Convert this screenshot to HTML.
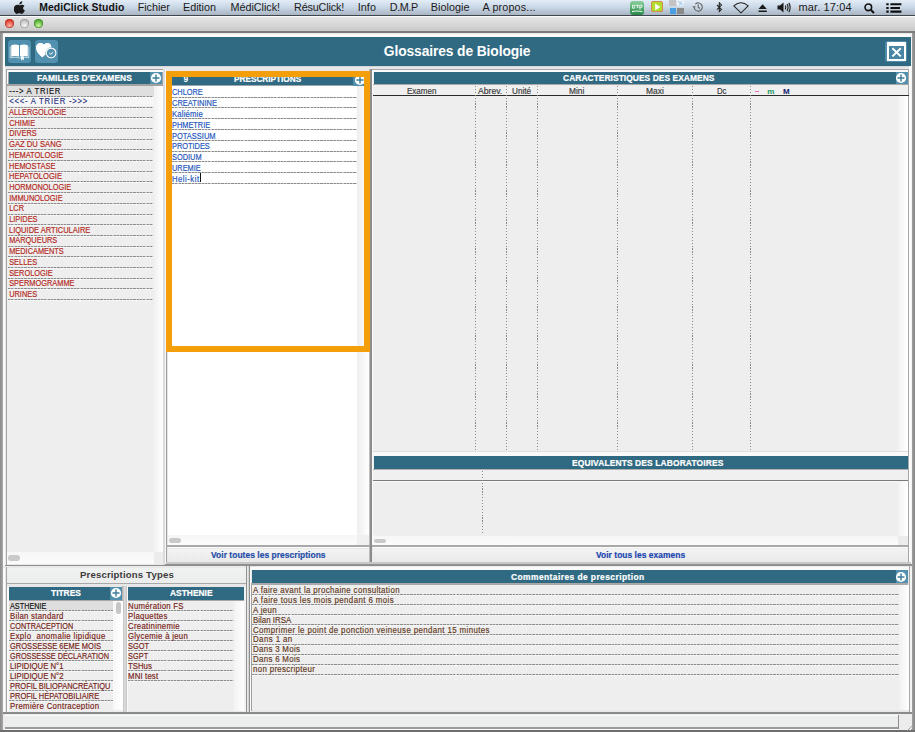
<!DOCTYPE html>
<html><head><meta charset="utf-8"><style>
html,body{margin:0;padding:0;width:915px;height:732px;overflow:hidden;background:#e6e6e6;}
body{position:relative;font-family:"Liberation Sans",sans-serif;}
div,span,svg{position:absolute;}
span{white-space:pre;line-height:1;}
</style></head><body>
<div style="left:0px;top:0px;width:915px;height:732px;background:#e6e6e6;"></div>
<div style="left:0px;top:0px;width:915px;height:14.5px;background:linear-gradient(#e2edf8 0%,#c9d6e4 50%,#a9b5c2 100%);"></div>
<div style="left:0px;top:14.5px;width:915px;height:1.2px;background:#3f464e;"></div>
<svg style="left:14px;top:1px" width="12" height="13" viewBox="0 0 12 13"><path d="M8.3 0.2c0.1 0.9-0.3 1.8-0.8 2.4-0.6 0.6-1.4 1-2.2 0.9-0.1-0.9 0.3-1.7 0.8-2.3 0.6-0.6 1.5-1 2.2-1z M10.9 9.2c-0.3 0.8-0.5 1.1-0.9 1.8-0.6 0.9-1.4 1.9-2.4 1.9-0.9 0-1.1-0.6-2.3-0.6-1.2 0-1.5 0.6-2.4 0.6-1 0-1.7-0.9-2.3-1.8C-0.9 8.6-0.1 5.2 1.6 4.3c0.6-0.4 1.3-0.6 2-0.6 0.9 0 1.5 0.6 2.3 0.6 0.7 0 1.2-0.6 2.3-0.6 0.8 0 1.7 0.4 2.3 1.2-2 1.1-1.7 4 0.3 4.3z" fill="#1a1a1a"/></svg>
<span style="left:39.20px;top:3.00px;font-size:10.4px;color:#111;font-weight:bold;letter-spacing:0.095px;">MediClick Studio</span>
<span style="left:137.70px;top:2.00px;font-size:10.8px;color:#1a1a1a;letter-spacing:-0.043px;">Fichier</span>
<span style="left:183.00px;top:2.00px;font-size:10.8px;color:#1a1a1a;">Edition</span>
<span style="left:230.50px;top:2.00px;font-size:10.8px;color:#1a1a1a;letter-spacing:-0.031px;">MédiClick!</span>
<span style="left:294.00px;top:2.00px;font-size:10.8px;color:#1a1a1a;letter-spacing:-0.161px;">RésuClick!</span>
<span style="left:357.70px;top:2.00px;font-size:10.8px;color:#1a1a1a;letter-spacing:0.072px;">Info</span>
<span style="left:389.80px;top:2.00px;font-size:10.8px;color:#1a1a1a;letter-spacing:-0.420px;">D.M.P</span>
<span style="left:430.80px;top:2.00px;font-size:10.8px;color:#1a1a1a;letter-spacing:0.034px;">Biologie</span>
<span style="left:482.60px;top:2.00px;font-size:10.8px;color:#1a1a1a;letter-spacing:0.134px;">A propos...</span>
<span style="left:798.60px;top:2.00px;font-size:11px;color:#1a1a1a;letter-spacing:0.103px;">mar. 17:04</span>
<div style="left:629.8px;top:0.7px;width:14px;height:14px;background:linear-gradient(#8fd09f,#58b072 45%,#3d9d5c 70%,#2a8748);border-radius:3px;"></div>
<svg style="left:630px;top:1px" width="14" height="14" viewBox="0 0 14 14"><path d="M2.5 4.2 h2.2 v3 h-2.2z M5.6 4.2 h3.6 v3 M7.4 4.2 v3 M10 4.2 h2 v2 h-2 v2.5" fill="none" stroke="#fff" stroke-width="0.9" opacity="0.9"/><path d="M2 10.6 Q7 9.2 12.5 10.8" stroke="#e8f5ea" stroke-width="1.1" fill="none"/></svg>
<div style="left:651.2px;top:0.6px;width:11.6px;height:11.8px;background:#b2dc2c;border-radius:2.5px;box-shadow:inset 0 0 0 0.8px #d77a5a;"></div>
<svg style="left:654px;top:2.6px" width="7" height="8"><path d="M1.2 0.6 L6.4 3.9 L1.2 7.2z" fill="#fff"/></svg>
<div style="left:668.8px;top:0px;width:7.2px;height:6.4px;background:#c3c3c3;"></div>
<div style="left:669.5px;top:7.5px;width:6.6px;height:6.6px;background:#4a9fe2;"></div>
<div style="left:677px;top:7.5px;width:6.5px;height:6.6px;background:#8a8a8a;"></div>
<div style="left:677px;top:0px;width:7px;height:6.4px;background:#eef3f8;"></div>
<svg style="left:677px;top:0px" width="7" height="6.4" viewBox="0 0 7 6.4"><path d="M1 1 L3 3 L5 1.5 M2 5 L4.5 3.5 L6 5.5" stroke="#7fb6e6" stroke-width="0.8" fill="none"/></svg>
<svg style="left:692px;top:1px" width="12" height="12" viewBox="0 0 12 12"><path d="M2.1 6.3 A4.1 4.1 0 1 0 3.3 3.1" fill="none" stroke="#666" stroke-width="1.1"/><path d="M6.2 3.4 V6.3 L8 7.5" fill="none" stroke="#666" stroke-width="1.1"/><path d="M0.3 5.3 L2.1 7.3 L3.9 5.3z" fill="#666"/></svg>
<svg style="left:716px;top:2px" width="7" height="11" viewBox="0 0 7 11"><path d="M1 3 L5.5 7.4 L3.3 9.6 V0.8 L5.5 3 L1 7.6" fill="none" stroke="#222" stroke-width="1.05"/></svg>
<svg style="left:733px;top:1.5px" width="16" height="12" viewBox="0 0 16 12"><path d="M0.8 3.8 Q8 -2.2 15.2 3.8 L8 11z" fill="none" stroke="#222" stroke-width="1.05" stroke-linejoin="round"/></svg>
<svg style="left:757.5px;top:3px" width="10" height="10" viewBox="0 0 10 10"><path d="M0.5 6 L4.6 1.2 L8.8 6z M0.5 7.4 H8.8 V8.9 H0.5z" fill="#1a1a1a"/></svg>
<svg style="left:776.5px;top:2px" width="14" height="11" viewBox="0 0 14 11"><path d="M0.5 3.5 H3 L6.5 0.5 V10.5 L3 7.5 H0.5z" fill="#1a1a1a"/><path d="M8.2 3.6 Q9.3 5.5 8.2 7.4 M10 2.1 Q12.1 5.5 10 8.9 M11.8 0.9 Q14.5 5.5 11.8 10.1" fill="none" stroke="#1a1a1a" stroke-width="1.1"/></svg>
<svg style="left:864px;top:2.5px" width="11" height="11" viewBox="0 0 11 11"><circle cx="4.3" cy="4.3" r="3.3" fill="none" stroke="#111" stroke-width="1.6"/><path d="M6.7 6.7 L10 10" stroke="#111" stroke-width="2"/></svg>
<svg style="left:885.5px;top:3px" width="16" height="10" viewBox="0 0 16 10"><path d="M0.3 0.2h2.4v2.1h-2.4z M0.3 3.9h2.4v2.1h-2.4z M0.3 7.6h2.4v2.1h-2.4z M4.4 0.2h11v2.1h-11z M4.4 3.9h9.6v2.1h-9.6z M4.4 7.6h11v2.1h-11z" fill="#111"/></svg>
<div style="left:0px;top:15.7px;width:915px;height:1.3px;background:#fbfbfb;"></div>
<div style="left:0px;top:17px;width:915px;height:13.8px;background:linear-gradient(#e5e5e5,#c9c9c9);"></div>
<div style="left:0px;top:30.8px;width:915px;height:1.8px;background:#7c7c7c;"></div>
<div style="left:5.200000000000001px;top:18.8px;width:9.2px;height:9.2px;border-radius:50%;background:radial-gradient(circle at 50% 72%,#ffb3a6 0%,#d8321f 70%);box-shadow:inset 0 0 0 0.6px #a33;"></div>
<div style="left:19.700000000000003px;top:18.8px;width:9.2px;height:9.2px;border-radius:50%;background:radial-gradient(circle at 50% 72%,#f6f6f6 0%,#b9b9b9 70%);box-shadow:inset 0 0 0 0.6px #8c8c8c;"></div>
<div style="left:34.0px;top:18.8px;width:9.2px;height:9.2px;border-radius:50%;background:radial-gradient(circle at 50% 72%,#c9f59d 0%,#48a82a 70%);box-shadow:inset 0 0 0 0.6px #3c7d2a;"></div>
<div style="left:0px;top:32.6px;width:915px;height:699.4px;background:#e8e8e8;"></div>
<div style="left:0px;top:32.6px;width:2.8px;height:699.4px;background:linear-gradient(90deg,#8a8a8a,#a8a8a8);"></div>
<div style="left:912px;top:32.6px;width:3px;height:699.4px;background:linear-gradient(90deg,#a0a0a0,#858585);"></div>
<div style="left:2.8px;top:33.5px;width:909.2px;height:3.1px;background:#fbfbfb;"></div>
<div style="left:2.8px;top:33.5px;width:2.5px;height:680px;background:#fbfbfb;"></div>
<div style="left:909.5px;top:33.5px;width:2.5px;height:680px;background:#f4f4f4;"></div>
<div style="left:5.3px;top:36.6px;width:905.9px;height:29.3px;background:#306a82;"></div>
<div style="left:8.2px;top:40px;width:22.5px;height:22.5px;background:#5190ae;border-radius:3px;"></div>
<div style="left:35.2px;top:40px;width:22.5px;height:22.5px;background:#5190ae;border-radius:3px;"></div>
<svg style="left:9px;top:42px" width="21" height="19" viewBox="0 0 21 19"><path d="M2.2 3.2 Q6 1.6 10 3.2 V14.6 Q6 13.2 2.2 14.6z" fill="#fff"/><path d="M11 3.2 Q15 1.6 18.8 3.2 V14.6 Q15 13.2 11 14.6z" fill="#fff"/><path d="M1.2 4.6 V15.8 Q6 14.6 10.5 16 Q15 14.6 19.8 15.8 V4.6" fill="none" stroke="#cfe0ea" stroke-width="0.9"/><path d="M12 14.2 V18.5 L13.4 17.2 L14.8 18.5 V14.2z" fill="#fff"/></svg>
<svg style="left:36px;top:41px" width="22" height="21" viewBox="0 0 22 21"><path d="M6.3 16.2 C2.8 13.2 0.2 10.6 0.2 6.3 C0.2 3.6 2.2 1.9 4.6 1.9 C6.2 1.9 7.3 2.8 7.9 3.9 C8.5 2.8 9.7 1.9 11.3 1.9 C13.7 1.9 15.3 3.6 15.3 6.2 L15.2 7" fill="#fff"/><path d="M6.3 16.2 C2.8 13.2 0.2 10.6 0.2 6.3 C0.2 3.6 2.2 1.9 4.6 1.9 C6.2 1.9 7.3 2.8 7.9 3.9 C8.5 2.8 9.7 1.9 11.3 1.9 C13.7 1.9 15.3 3.6 15.3 6.2 L15.3 7 L10 9 L9.5 13.5z" fill="#fff"/><circle cx="15.1" cy="11.9" r="5.6" fill="#5190ae"/><circle cx="15.1" cy="11.9" r="4.8" fill="none" stroke="#fff" stroke-width="1.1"/><path d="M13.1 11.9 L14.9 13.3 L17.3 11.1" fill="none" stroke="#fff" stroke-width="1"/></svg>
<span style="left:383.80px;top:45.00px;font-size:13.8px;color:#fff;font-weight:bold;letter-spacing:-0.099px;">Glossaires de Biologie</span>
<div style="left:885.4px;top:40.8px;width:21.5px;height:21.5px;background:#4f8dab;border-radius:3px;"></div>
<div style="left:886.8px;top:41.5px;width:19.2px;height:19px;background:#fff;"></div>
<div style="left:888.5px;top:46px;width:15.5px;height:12.8px;background:#4886a4;"></div>
<svg style="left:890.5px;top:46.8px" width="11" height="10.5" viewBox="0 0 11 10.5"><path d="M1.4 1.2 L9.8 9.4 M9.8 1.2 L1.4 9.4" stroke="#fff" stroke-width="1.9"/></svg>
<div style="left:5.3px;top:65.9px;width:905.9px;height:1.2px;background:#d6d6d6;"></div>
<div style="left:5.9px;top:69px;width:158px;height:17px;background:#a2a2a2;"></div>
<div style="left:6.9px;top:70.1px;width:156px;height:1.5px;background:#fafafa;"></div>
<div style="left:6.9px;top:70.1px;width:1.6px;height:14px;background:#fafafa;"></div>
<div style="left:8.6px;top:71.6px;width:153.5px;height:12.2px;background:#306a82;"></div>
<span style="left:37.00px;top:75.00px;font-size:8.1px;color:#fff;font-weight:bold;letter-spacing:0.067px;transform:scale(1.0400,1.150);transform-origin:0 6px;-webkit-text-stroke:0.18px #fff;">FAMILLES D&#x27;EXAMENS</span>
<div style="left:149.8px;top:71.6px;width:12.199999999999989px;height:12.200000000000003px;background:#5290ad;"></div>
<svg style="left:149.80px;top:71.80px" width="12" height="12" viewBox="0 0 12 12"><circle cx="6" cy="6" r="5.1" fill="#fff"/><path d="M6 2.5 V9.5 M2.5 6 H9.5" stroke="#3f7f9c" stroke-width="1.45"/></svg>
<div style="left:5.9px;top:86px;width:1.1px;height:479px;background:#a5a5a5;"></div>
<div style="left:7px;top:85.8px;width:146.5px;height:478px;background:#eeeeee;"></div>
<div style="left:153.5px;top:85.8px;width:9.7px;height:466px;background:linear-gradient(90deg,#f1f1f1,#ffffff);"></div>
<div style="left:163.2px;top:69px;width:1.5px;height:496px;background:#dcdcdc;"></div>
<div style="left:164.7px;top:69px;width:1.3px;height:496px;background:#f7f9fb;"></div>
<div style="left:7px;top:85.8px;width:146.5px;height:10.5px;background:#dfdfdf;"></div>
<div style="left:7px;top:97.3px;width:146.5px;height:9.2px;background:#f6f6f6;"></div>
<div style="left:7.5px;top:95.8px;width:145.5px;height:1px;background-image:repeating-linear-gradient(90deg,#8c8c8c 0 2.2px,#c6c6c6 2.2px 3.3px);"></div>
<div style="left:7.5px;top:96.8px;width:145.5px;height:1px;background:rgba(255,255,255,0.45);"></div>
<span style="left:9.20px;top:88.00px;font-size:7.7px;color:#111;letter-spacing:0.690px;transform:scale(1.0000,1.100);transform-origin:0 6px;-webkit-text-stroke:0.12px #111;">---&gt; A TRIER</span>
<div style="left:7.5px;top:106.5px;width:145.5px;height:1px;background-image:repeating-linear-gradient(90deg,#8c8c8c 0 2.2px,#c6c6c6 2.2px 3.3px);"></div>
<div style="left:7.5px;top:107.5px;width:145.5px;height:1px;background:rgba(255,255,255,0.45);"></div>
<span style="left:9.20px;top:98.00px;font-size:7.7px;color:#26337e;letter-spacing:0.778px;transform:scale(1.0000,1.100);transform-origin:0 6px;-webkit-text-stroke:0.12px #26337e;">&lt;&lt;&lt;- A TRIER -&gt;&gt;&gt;</span>
<div style="left:7.5px;top:117.19999999999999px;width:145.5px;height:1px;background-image:repeating-linear-gradient(90deg,#8c8c8c 0 2.2px,#c6c6c6 2.2px 3.3px);"></div>
<div style="left:7.5px;top:118.19999999999999px;width:145.5px;height:1px;background:rgba(255,255,255,0.45);"></div>
<span style="left:9.20px;top:109.00px;font-size:7.4px;color:#b52a1f;transform:scale(0.9935,1.150);transform-origin:0 6px;-webkit-text-stroke:0.16px #b52a1f;">ALLERGOLOGIE</span>
<div style="left:7.5px;top:127.89999999999998px;width:145.5px;height:1px;background-image:repeating-linear-gradient(90deg,#8c8c8c 0 2.2px,#c6c6c6 2.2px 3.3px);"></div>
<div style="left:7.5px;top:128.89999999999998px;width:145.5px;height:1px;background:rgba(255,255,255,0.45);"></div>
<span style="left:9.20px;top:120.00px;font-size:7.4px;color:#b52a1f;transform:scale(1.0000,1.150);transform-origin:0 6px;-webkit-text-stroke:0.16px #b52a1f;">CHIMIE</span>
<div style="left:7.5px;top:138.6px;width:145.5px;height:1px;background-image:repeating-linear-gradient(90deg,#8c8c8c 0 2.2px,#c6c6c6 2.2px 3.3px);"></div>
<div style="left:7.5px;top:139.6px;width:145.5px;height:1px;background:rgba(255,255,255,0.45);"></div>
<span style="left:9.20px;top:130.00px;font-size:7.4px;color:#b52a1f;transform:scale(1.0000,1.150);transform-origin:0 6px;-webkit-text-stroke:0.16px #b52a1f;">DIVERS</span>
<div style="left:7.5px;top:149.3px;width:145.5px;height:1px;background-image:repeating-linear-gradient(90deg,#8c8c8c 0 2.2px,#c6c6c6 2.2px 3.3px);"></div>
<div style="left:7.5px;top:150.3px;width:145.5px;height:1px;background:rgba(255,255,255,0.45);"></div>
<span style="left:9.20px;top:141.00px;font-size:7.4px;color:#b52a1f;transform:scale(1.0327,1.150);transform-origin:0 6px;-webkit-text-stroke:0.16px #b52a1f;">GAZ DU SANG</span>
<div style="left:7.5px;top:160.0px;width:145.5px;height:1px;background-image:repeating-linear-gradient(90deg,#8c8c8c 0 2.2px,#c6c6c6 2.2px 3.3px);"></div>
<div style="left:7.5px;top:161.0px;width:145.5px;height:1px;background:rgba(255,255,255,0.45);"></div>
<span style="left:9.20px;top:152.00px;font-size:7.4px;color:#b52a1f;transform:scale(1.0128,1.150);transform-origin:0 6px;-webkit-text-stroke:0.16px #b52a1f;">HEMATOLOGIE</span>
<div style="left:7.5px;top:170.7px;width:145.5px;height:1px;background-image:repeating-linear-gradient(90deg,#8c8c8c 0 2.2px,#c6c6c6 2.2px 3.3px);"></div>
<div style="left:7.5px;top:171.7px;width:145.5px;height:1px;background:rgba(255,255,255,0.45);"></div>
<span style="left:9.20px;top:163.00px;font-size:7.4px;color:#b52a1f;transform:scale(1.0120,1.150);transform-origin:0 6px;-webkit-text-stroke:0.16px #b52a1f;">HEMOSTASE</span>
<div style="left:7.5px;top:181.39999999999998px;width:145.5px;height:1px;background-image:repeating-linear-gradient(90deg,#8c8c8c 0 2.2px,#c6c6c6 2.2px 3.3px);"></div>
<div style="left:7.5px;top:182.39999999999998px;width:145.5px;height:1px;background:rgba(255,255,255,0.45);"></div>
<span style="left:9.20px;top:173.00px;font-size:7.4px;color:#b52a1f;transform:scale(1.0238,1.150);transform-origin:0 6px;-webkit-text-stroke:0.16px #b52a1f;">HEPATOLOGIE</span>
<div style="left:7.5px;top:192.1px;width:145.5px;height:1px;background-image:repeating-linear-gradient(90deg,#8c8c8c 0 2.2px,#c6c6c6 2.2px 3.3px);"></div>
<div style="left:7.5px;top:193.1px;width:145.5px;height:1px;background:rgba(255,255,255,0.45);"></div>
<span style="left:9.20px;top:184.00px;font-size:7.4px;color:#b52a1f;transform:scale(1.0000,1.150);transform-origin:0 6px;-webkit-text-stroke:0.16px #b52a1f;">HORMONOLOGIE</span>
<div style="left:7.5px;top:202.8px;width:145.5px;height:1px;background-image:repeating-linear-gradient(90deg,#8c8c8c 0 2.2px,#c6c6c6 2.2px 3.3px);"></div>
<div style="left:7.5px;top:203.8px;width:145.5px;height:1px;background:rgba(255,255,255,0.45);"></div>
<span style="left:9.20px;top:195.00px;font-size:7.4px;color:#b52a1f;transform:scale(1.0000,1.150);transform-origin:0 6px;-webkit-text-stroke:0.16px #b52a1f;">IMMUNOLOGIE</span>
<div style="left:7.5px;top:213.5px;width:145.5px;height:1px;background-image:repeating-linear-gradient(90deg,#8c8c8c 0 2.2px,#c6c6c6 2.2px 3.3px);"></div>
<div style="left:7.5px;top:214.5px;width:145.5px;height:1px;background:rgba(255,255,255,0.45);"></div>
<span style="left:9.20px;top:205.00px;font-size:7.4px;color:#b52a1f;transform:scale(1.0000,1.150);transform-origin:0 6px;-webkit-text-stroke:0.16px #b52a1f;">LCR</span>
<div style="left:7.5px;top:224.2px;width:145.5px;height:1px;background-image:repeating-linear-gradient(90deg,#8c8c8c 0 2.2px,#c6c6c6 2.2px 3.3px);"></div>
<div style="left:7.5px;top:225.2px;width:145.5px;height:1px;background:rgba(255,255,255,0.45);"></div>
<span style="left:9.20px;top:216.00px;font-size:7.4px;color:#b52a1f;transform:scale(1.0000,1.150);transform-origin:0 6px;-webkit-text-stroke:0.16px #b52a1f;">LIPIDES</span>
<div style="left:7.5px;top:234.89999999999998px;width:145.5px;height:1px;background-image:repeating-linear-gradient(90deg,#8c8c8c 0 2.2px,#c6c6c6 2.2px 3.3px);"></div>
<div style="left:7.5px;top:235.89999999999998px;width:145.5px;height:1px;background:rgba(255,255,255,0.45);"></div>
<span style="left:9.20px;top:227.00px;font-size:7.4px;color:#b52a1f;transform:scale(1.0172,1.150);transform-origin:0 6px;-webkit-text-stroke:0.16px #b52a1f;">LIQUIDE ARTICULAIRE</span>
<div style="left:7.5px;top:245.59999999999997px;width:145.5px;height:1px;background-image:repeating-linear-gradient(90deg,#8c8c8c 0 2.2px,#c6c6c6 2.2px 3.3px);"></div>
<div style="left:7.5px;top:246.59999999999997px;width:145.5px;height:1px;background:rgba(255,255,255,0.45);"></div>
<span style="left:9.20px;top:237.00px;font-size:7.4px;color:#b52a1f;transform:scale(1.0000,1.150);transform-origin:0 6px;-webkit-text-stroke:0.16px #b52a1f;">MARQUEURS</span>
<div style="left:7.5px;top:256.3px;width:145.5px;height:1px;background-image:repeating-linear-gradient(90deg,#8c8c8c 0 2.2px,#c6c6c6 2.2px 3.3px);"></div>
<div style="left:7.5px;top:257.3px;width:145.5px;height:1px;background:rgba(255,255,255,0.45);"></div>
<span style="left:9.20px;top:248.00px;font-size:7.4px;color:#b52a1f;transform:scale(1.0000,1.150);transform-origin:0 6px;-webkit-text-stroke:0.16px #b52a1f;">MEDICAMENTS</span>
<div style="left:7.5px;top:267.0px;width:145.5px;height:1px;background-image:repeating-linear-gradient(90deg,#8c8c8c 0 2.2px,#c6c6c6 2.2px 3.3px);"></div>
<div style="left:7.5px;top:268.0px;width:145.5px;height:1px;background:rgba(255,255,255,0.45);"></div>
<span style="left:9.20px;top:259.00px;font-size:7.4px;color:#b52a1f;transform:scale(1.0000,1.150);transform-origin:0 6px;-webkit-text-stroke:0.16px #b52a1f;">SELLES</span>
<div style="left:7.5px;top:277.7px;width:145.5px;height:1px;background-image:repeating-linear-gradient(90deg,#8c8c8c 0 2.2px,#c6c6c6 2.2px 3.3px);"></div>
<div style="left:7.5px;top:278.7px;width:145.5px;height:1px;background:rgba(255,255,255,0.45);"></div>
<span style="left:9.20px;top:270.00px;font-size:7.4px;color:#b52a1f;transform:scale(1.0000,1.150);transform-origin:0 6px;-webkit-text-stroke:0.16px #b52a1f;">SEROLOGIE</span>
<div style="left:7.5px;top:288.4px;width:145.5px;height:1px;background-image:repeating-linear-gradient(90deg,#8c8c8c 0 2.2px,#c6c6c6 2.2px 3.3px);"></div>
<div style="left:7.5px;top:289.4px;width:145.5px;height:1px;background:rgba(255,255,255,0.45);"></div>
<span style="left:9.20px;top:280.00px;font-size:7.4px;color:#b52a1f;transform:scale(1.0000,1.150);transform-origin:0 6px;-webkit-text-stroke:0.16px #b52a1f;">SPERMOGRAMME</span>
<div style="left:7.5px;top:299.09999999999997px;width:145.5px;height:1px;background-image:repeating-linear-gradient(90deg,#8c8c8c 0 2.2px,#c6c6c6 2.2px 3.3px);"></div>
<div style="left:7.5px;top:300.09999999999997px;width:145.5px;height:1px;background:rgba(255,255,255,0.45);"></div>
<span style="left:9.20px;top:291.00px;font-size:7.4px;color:#b52a1f;transform:scale(1.0000,1.150);transform-origin:0 6px;-webkit-text-stroke:0.16px #b52a1f;">URINES</span>
<div style="left:7px;top:552px;width:146.5px;height:11.5px;background:linear-gradient(#f6f6f6,#fbfbfb);"></div>
<div style="left:153.5px;top:552px;width:9.7px;height:11.5px;background:#ececec;"></div>
<div style="left:8.2px;top:555.3px;width:12px;height:5.5px;background:#c9c9c9;border-radius:3px;"></div>
<div style="left:4.5px;top:564.8px;width:160px;height:1.3px;background:#8f8f8f;"></div>
<div style="left:166.3px;top:86px;width:1.2px;height:460px;background:#9c9c9c;"></div>
<div style="left:167.5px;top:70.7px;width:201px;height:476px;background:#fff;"></div>
<div style="left:172px;top:76.8px;width:192px;height:9px;background:#306a82;"></div>
<div style="left:172px;top:85.3px;width:192px;height:1px;background:#9aa6ac;"></div>
<span style="left:183.40px;top:75.00px;font-size:8.4px;color:#fff;font-weight:bold;">9</span>
<span style="left:233.90px;top:76.00px;font-size:8.1px;color:#fff;font-weight:bold;transform:scale(1.0157,1.150);transform-origin:0 6px;-webkit-text-stroke:0.18px #fff;">PRESCRIPTIONS</span>
<div style="left:353px;top:76.8px;width:11px;height:9.0px;background:#5290ad;"></div>
<svg style="left:353.50px;top:73.60px" width="12" height="12" viewBox="0 0 12 12"><circle cx="6" cy="6" r="5.1" fill="#fff"/><path d="M6 2.5 V9.5 M2.5 6 H9.5" stroke="#3f7f9c" stroke-width="1.45"/></svg>
<div style="left:357px;top:86px;width:11.5px;height:449px;background:linear-gradient(90deg,#eeeeee,#ffffff);"></div>
<div style="left:172px;top:96.7px;width:185px;height:1px;background-image:repeating-linear-gradient(90deg,#8c8c8c 0 2.2px,#c6c6c6 2.2px 3.3px);"></div>
<div style="left:172px;top:97.7px;width:185px;height:1px;background:rgba(255,255,255,0.45);"></div>
<span style="left:172.00px;top:89.00px;font-size:7.4px;color:#1f56bd;transform:scale(1.0000,1.150);transform-origin:0 6px;-webkit-text-stroke:0.16px #1f56bd;">CHLORE</span>
<div style="left:172px;top:107.48px;width:185px;height:1px;background-image:repeating-linear-gradient(90deg,#8c8c8c 0 2.2px,#c6c6c6 2.2px 3.3px);"></div>
<div style="left:172px;top:108.48px;width:185px;height:1px;background:rgba(255,255,255,0.45);"></div>
<span style="left:172.00px;top:100.00px;font-size:7.4px;color:#1f56bd;transform:scale(1.0166,1.150);transform-origin:0 6px;-webkit-text-stroke:0.16px #1f56bd;">CREATININE</span>
<div style="left:172px;top:118.26px;width:185px;height:1px;background-image:repeating-linear-gradient(90deg,#8c8c8c 0 2.2px,#c6c6c6 2.2px 3.3px);"></div>
<div style="left:172px;top:119.26px;width:185px;height:1px;background:rgba(255,255,255,0.45);"></div>
<span style="left:172.00px;top:111.00px;font-size:7.4px;color:#1f56bd;letter-spacing:0.179px;transform:scale(1.0400,1.150);transform-origin:0 6px;-webkit-text-stroke:0.16px #1f56bd;">Kaliémie</span>
<div style="left:172px;top:129.04px;width:185px;height:1px;background-image:repeating-linear-gradient(90deg,#8c8c8c 0 2.2px,#c6c6c6 2.2px 3.3px);"></div>
<div style="left:172px;top:130.04px;width:185px;height:1px;background:rgba(255,255,255,0.45);"></div>
<span style="left:172.00px;top:122.00px;font-size:7.4px;color:#1f56bd;transform:scale(1.0000,1.150);transform-origin:0 6px;-webkit-text-stroke:0.16px #1f56bd;">PHMETRIE</span>
<div style="left:172px;top:139.82px;width:185px;height:1px;background-image:repeating-linear-gradient(90deg,#8c8c8c 0 2.2px,#c6c6c6 2.2px 3.3px);"></div>
<div style="left:172px;top:140.82px;width:185px;height:1px;background:rgba(255,255,255,0.45);"></div>
<span style="left:172.00px;top:133.00px;font-size:7.4px;color:#1f56bd;transform:scale(1.0128,1.150);transform-origin:0 6px;-webkit-text-stroke:0.16px #1f56bd;">POTASSIUM</span>
<div style="left:172px;top:150.6px;width:185px;height:1px;background-image:repeating-linear-gradient(90deg,#8c8c8c 0 2.2px,#c6c6c6 2.2px 3.3px);"></div>
<div style="left:172px;top:151.6px;width:185px;height:1px;background:rgba(255,255,255,0.45);"></div>
<span style="left:172.00px;top:143.00px;font-size:7.4px;color:#1f56bd;transform:scale(1.0000,1.150);transform-origin:0 6px;-webkit-text-stroke:0.16px #1f56bd;">PROTIDES</span>
<div style="left:172px;top:161.38px;width:185px;height:1px;background-image:repeating-linear-gradient(90deg,#8c8c8c 0 2.2px,#c6c6c6 2.2px 3.3px);"></div>
<div style="left:172px;top:162.38px;width:185px;height:1px;background:rgba(255,255,255,0.45);"></div>
<span style="left:172.00px;top:154.00px;font-size:7.4px;color:#1f56bd;transform:scale(1.0000,1.150);transform-origin:0 6px;-webkit-text-stroke:0.16px #1f56bd;">SODIUM</span>
<div style="left:172px;top:172.16px;width:185px;height:1px;background-image:repeating-linear-gradient(90deg,#8c8c8c 0 2.2px,#c6c6c6 2.2px 3.3px);"></div>
<div style="left:172px;top:173.16px;width:185px;height:1px;background:rgba(255,255,255,0.45);"></div>
<span style="left:172.00px;top:165.00px;font-size:7.4px;color:#1f56bd;transform:scale(1.0000,1.150);transform-origin:0 6px;-webkit-text-stroke:0.16px #1f56bd;">UREMIE</span>
<div style="left:172px;top:182.94px;width:185px;height:1px;background-image:repeating-linear-gradient(90deg,#8c8c8c 0 2.2px,#c6c6c6 2.2px 3.3px);"></div>
<div style="left:172px;top:183.94px;width:185px;height:1px;background:rgba(255,255,255,0.45);"></div>
<span style="left:172.00px;top:176.00px;font-size:7.4px;color:#1f56bd;letter-spacing:0.491px;transform:scale(1.0400,1.150);transform-origin:0 6px;-webkit-text-stroke:0.16px #1f56bd;">Heli-kit</span>
<div style="left:200.3px;top:172.7px;width:1px;height:9.5px;background:#111;"></div>
<div style="left:166px;top:70.7px;width:192px;height:269.1px;border:6px solid #f49f0a;z-index:5;"></div>
<div style="left:368.5px;top:69px;width:1.2px;height:496px;background:#bdbdbd;"></div>
<div style="left:167.5px;top:535px;width:189.5px;height:11px;background:linear-gradient(#f6f6f6,#fcfcfc);"></div>
<div style="left:357px;top:535px;width:11.5px;height:11px;background:#f0f0f0;"></div>
<div style="left:169.4px;top:538.2px;width:11.6px;height:4.6px;background:#c9c9c9;border-radius:3px;"></div>
<div style="left:166.3px;top:545.2px;width:204px;height:1.9px;background:#a9a9a9;"></div>
<div style="left:167.5px;top:547.1px;width:201px;height:1.4px;background:#fbfbfb;"></div>
<div style="left:167.5px;top:548.5px;width:201px;height:13.4px;background:linear-gradient(#f3f3f3,#e9e9e9);"></div>
<div style="left:166.3px;top:547px;width:1.2px;height:15px;background:#a0a0a0;"></div>
<span style="left:211.00px;top:552.00px;font-size:8.1px;color:#1f4ea8;font-weight:bold;letter-spacing:0.052px;transform:scale(1.0400,1.150);transform-origin:0 6px;-webkit-text-stroke:0.18px #1f4ea8;">Voir toutes les prescriptions</span>
<div style="left:370.2px;top:68.5px;width:1.8px;height:496.5px;background:#8c8c8c;"></div>
<div style="left:371.7px;top:69px;width:537.6px;height:1.1px;background:#a8a8a8;"></div>
<div style="left:371.7px;top:70.1px;width:537.6px;height:1.5px;background:#fafafa;"></div>
<div style="left:372px;top:70.1px;width:1.5px;height:475px;background:#fafafa;"></div>
<div style="left:373.3px;top:71.6px;width:536px;height:478px;background:#eeeeee;"></div>
<div style="left:908.2px;top:69px;width:1px;height:496px;background:#a8a8a8;"></div>
<div style="left:909.4px;top:66px;width:1.8px;height:500px;background:#fbfbfb;"></div>
<div style="left:374px;top:71.6px;width:534px;height:12.5px;background:#306a82;"></div>
<div style="left:373.3px;top:84.1px;width:535.2px;height:1.4px;background:#a9a9a9;"></div>
<span style="left:563.40px;top:75.00px;font-size:8.1px;color:#fff;font-weight:bold;letter-spacing:0.046px;transform:scale(1.0400,1.150);transform-origin:0 6px;-webkit-text-stroke:0.18px #fff;">CARACTERISTIQUES DES EXAMENS</span>
<div style="left:895.7px;top:71.6px;width:12.299999999999955px;height:12.5px;background:#5290ad;"></div>
<svg style="left:895.40px;top:71.80px" width="12" height="12" viewBox="0 0 12 12"><circle cx="6" cy="6" r="5.1" fill="#fff"/><path d="M6 2.5 V9.5 M2.5 6 H9.5" stroke="#3f7f9c" stroke-width="1.45"/></svg>
<div style="left:373.3px;top:85.5px;width:535.2px;height:9.6px;background:#f0f0f0;"></div>
<div style="left:373.3px;top:95px;width:535.7px;height:1.3px;background:#2b2b2b;"></div>
<span style="left:407.30px;top:88.00px;font-size:7.7px;color:#3a3a3a;transform:scale(1.0444,1.080);transform-origin:0 6px;-webkit-text-stroke:0.15px #3a3a3a;">Examen</span>
<span style="left:477.90px;top:88.00px;font-size:7.7px;color:#3a3a3a;transform:scale(1.1208,1.080);transform-origin:0 6px;-webkit-text-stroke:0.15px #3a3a3a;">Abrev.</span>
<span style="left:511.70px;top:88.00px;font-size:7.7px;color:#3a3a3a;transform:scale(1.0626,1.080);transform-origin:0 6px;-webkit-text-stroke:0.15px #3a3a3a;">Unité</span>
<span style="left:569.10px;top:88.00px;font-size:7.7px;color:#3a3a3a;transform:scale(1.0838,1.080);transform-origin:0 6px;-webkit-text-stroke:0.15px #3a3a3a;">Mini</span>
<span style="left:645.60px;top:88.00px;font-size:7.7px;color:#3a3a3a;transform:scale(1.0949,1.080);transform-origin:0 6px;-webkit-text-stroke:0.15px #3a3a3a;">Maxi</span>
<span style="left:716.70px;top:88.00px;font-size:7.7px;color:#3a3a3a;transform:scale(1.0095,1.080);transform-origin:0 6px;-webkit-text-stroke:0.15px #3a3a3a;">Dc</span>
<div style="left:755px;top:90.6px;width:4px;height:1px;background:#f070c0;"></div>
<span style="left:767.20px;top:88.00px;font-size:8px;color:#189a5c;font-weight:bold;">m</span>
<span style="left:783.00px;top:88.00px;font-size:8px;color:#12206e;font-weight:bold;">M</span>
<div style="left:474.9px;top:86px;width:1px;height:365px;background-image:repeating-linear-gradient(#8a8a8a 0 1.2px,transparent 1.2px 2.9px);"></div>
<div style="left:506.4px;top:86px;width:1px;height:365px;background-image:repeating-linear-gradient(#8a8a8a 0 1.2px,transparent 1.2px 2.9px);"></div>
<div style="left:536.5px;top:86px;width:1px;height:365px;background-image:repeating-linear-gradient(#8a8a8a 0 1.2px,transparent 1.2px 2.9px);"></div>
<div style="left:617.3px;top:86px;width:1px;height:365px;background-image:repeating-linear-gradient(#8a8a8a 0 1.2px,transparent 1.2px 2.9px);"></div>
<div style="left:692.1px;top:86px;width:1px;height:365px;background-image:repeating-linear-gradient(#8a8a8a 0 1.2px,transparent 1.2px 2.9px);"></div>
<div style="left:750.3px;top:86px;width:1px;height:365px;background-image:repeating-linear-gradient(#8a8a8a 0 1.2px,transparent 1.2px 2.9px);"></div>
<div style="left:898.4px;top:96.3px;width:10.1px;height:355px;background:linear-gradient(90deg,#f2f2f2,#ffffff);"></div>
<div style="left:373.3px;top:451px;width:535.2px;height:1.3px;background:#dddddd;"></div>
<div style="left:373.3px;top:452.3px;width:535.2px;height:3.6px;background:#f9f9f9;"></div>
<div style="left:373.9px;top:455.6px;width:534.6px;height:13.2px;background:#306a82;"></div>
<div style="left:373.3px;top:468.8px;width:535.2px;height:1.4px;background:#b0b0b0;"></div>
<span style="left:572.00px;top:460.00px;font-size:8.1px;color:#fff;font-weight:bold;letter-spacing:0.124px;transform:scale(1.0400,1.150);transform-origin:0 6px;-webkit-text-stroke:0.18px #fff;">EQUIVALENTS DES LABORATOIRES</span>
<div style="left:373.3px;top:470.2px;width:535.2px;height:9.3px;background:#f0f0f0;"></div>
<div style="left:373.3px;top:479.5px;width:535.2px;height:1.3px;background:#7a7a7a;"></div>
<div style="left:373.3px;top:480.8px;width:535.2px;height:1px;background:#fafafa;"></div>
<div style="left:482.2px;top:471px;width:1px;height:63px;background-image:repeating-linear-gradient(#8a8a8a 0 1.2px,transparent 1.2px 2.9px);"></div>
<div style="left:898.4px;top:481px;width:10.1px;height:55px;background:linear-gradient(90deg,#f2f2f2,#ffffff);"></div>
<div style="left:373.3px;top:535.5px;width:525px;height:10px;background:linear-gradient(#f6f6f6,#fcfcfc);"></div>
<div style="left:898.4px;top:535.5px;width:10.1px;height:10px;background:#ececec;"></div>
<div style="left:373.8px;top:538.5px;width:11.8px;height:4.6px;background:#c9c9c9;border-radius:3px;"></div>
<div style="left:371.7px;top:545.2px;width:537.7px;height:1.9px;background:#a9a9a9;"></div>
<div style="left:373.3px;top:547.1px;width:535.2px;height:1.4px;background:#fbfbfb;"></div>
<div style="left:373.3px;top:548.5px;width:535.2px;height:13.4px;background:linear-gradient(#f3f3f3,#e9e9e9);"></div>
<span style="left:596.40px;top:552.00px;font-size:8.1px;color:#2046b0;font-weight:bold;letter-spacing:0.040px;transform:scale(1.0400,1.150);transform-origin:0 6px;-webkit-text-stroke:0.18px #2046b0;">Voir tous les examens</span>
<div style="left:166.3px;top:562.4px;width:745px;height:1.3px;background:#c8c8c8;"></div>
<div style="left:164.7px;top:563.6px;width:747px;height:2px;background:#8f8f8f;"></div>
<div style="left:3px;top:565.6px;width:909px;height:2px;background:#e9e9e9;"></div>
<div style="left:5.7px;top:566.5px;width:1.3px;height:146px;background:#a5a5a5;"></div>
<div style="left:7px;top:567.5px;width:239.5px;height:15.3px;background:linear-gradient(#f0f1f1,#ebecec);"></div>
<span style="left:79.60px;top:571.00px;font-size:9.2px;color:#3c3c3c;font-weight:bold;letter-spacing:0.165px;transform:scale(1.0400,1.050);transform-origin:0 7px;">Prescriptions Types</span>
<div style="left:7px;top:582.8px;width:239.5px;height:1.7px;background:#a8a8a8;"></div>
<div style="left:7px;top:584.5px;width:239.5px;height:2.2px;background:#e6e6e6;"></div>
<div style="left:7.4px;top:586.9px;width:1.2px;height:125px;background:#fafafa;"></div>
<div style="left:8.6px;top:586.9px;width:113.3px;height:12.7px;background:#306a82;"></div>
<div style="left:121.9px;top:585.5px;width:1.4px;height:15px;background:#b5b5b5;"></div>
<div style="left:8.6px;top:599.6px;width:114.7px;height:1px;background:#a8a8a8;"></div>
<span style="left:50.80px;top:590.00px;font-size:8.1px;color:#fff;font-weight:bold;transform:scale(1.0382,1.150);transform-origin:0 6px;-webkit-text-stroke:0.18px #fff;">TITRES</span>
<div style="left:109.9px;top:586.9px;width:12.0px;height:12.700000000000045px;background:#5290ad;"></div>
<svg style="left:109.90px;top:587.10px" width="12" height="12" viewBox="0 0 12 12"><circle cx="6" cy="6" r="5.1" fill="#fff"/><path d="M6 2.5 V9.5 M2.5 6 H9.5" stroke="#3f7f9c" stroke-width="1.45"/></svg>
<div style="left:8.6px;top:600.6px;width:104.6px;height:110px;background:#eeeeee;"></div>
<div style="left:8.6px;top:600.6px;width:104.6px;height:9.8px;background:#dedede;"></div>
<div style="left:113.2px;top:600.6px;width:9.8px;height:110px;background:linear-gradient(90deg,#f7f7f7,#ffffff);"></div>
<div style="left:115.9px;top:601.9px;width:5.5px;height:12.5px;background:#c6c6c6;border-radius:3px;"></div>
<div style="left:8.6px;top:609.9px;width:104.3px;height:1px;background-image:repeating-linear-gradient(90deg,#8c8c8c 0 2.2px,#c6c6c6 2.2px 3.3px);"></div>
<div style="left:8.6px;top:610.9px;width:104.3px;height:1px;background:rgba(255,255,255,0.45);"></div>
<span style="left:9.60px;top:603.00px;font-size:7.5px;color:#151515;transform:scale(0.9719,1.120);transform-origin:0 6px;-webkit-text-stroke:0.16px #151515;">ASTHENIE</span>
<div style="left:8.6px;top:619.9px;width:104.3px;height:1px;background-image:repeating-linear-gradient(90deg,#8c8c8c 0 2.2px,#c6c6c6 2.2px 3.3px);"></div>
<div style="left:8.6px;top:620.9px;width:104.3px;height:1px;background:rgba(255,255,255,0.45);"></div>
<span style="left:9.60px;top:613.00px;font-size:7.5px;color:#782519;letter-spacing:0.256px;transform:scale(1.0400,1.120);transform-origin:0 6px;-webkit-text-stroke:0.16px #782519;">Bilan standard</span>
<div style="left:8.6px;top:629.9px;width:104.3px;height:1px;background-image:repeating-linear-gradient(90deg,#8c8c8c 0 2.2px,#c6c6c6 2.2px 3.3px);"></div>
<div style="left:8.6px;top:630.9px;width:104.3px;height:1px;background:rgba(255,255,255,0.45);"></div>
<span style="left:9.60px;top:623.00px;font-size:7.5px;color:#782519;transform:scale(0.9719,1.120);transform-origin:0 6px;-webkit-text-stroke:0.16px #782519;">CONTRACEPTION</span>
<div style="left:8.6px;top:639.9px;width:104.3px;height:1px;background-image:repeating-linear-gradient(90deg,#8c8c8c 0 2.2px,#c6c6c6 2.2px 3.3px);"></div>
<div style="left:8.6px;top:640.9px;width:104.3px;height:1px;background:rgba(255,255,255,0.45);"></div>
<span style="left:9.60px;top:633.00px;font-size:7.5px;color:#782519;letter-spacing:0.358px;transform:scale(1.0400,1.120);transform-origin:0 6px;-webkit-text-stroke:0.16px #782519;">Explo  anomalie lipidique</span>
<div style="left:8.6px;top:649.9px;width:104.3px;height:1px;background-image:repeating-linear-gradient(90deg,#8c8c8c 0 2.2px,#c6c6c6 2.2px 3.3px);"></div>
<div style="left:8.6px;top:650.9px;width:104.3px;height:1px;background:rgba(255,255,255,0.45);"></div>
<span style="left:9.60px;top:643.00px;font-size:7.5px;color:#782519;transform:scale(1.0020,1.120);transform-origin:0 6px;-webkit-text-stroke:0.16px #782519;">GROSSESSE 6EME MOIS</span>
<div style="left:8.6px;top:659.9px;width:104.3px;height:1px;background-image:repeating-linear-gradient(90deg,#8c8c8c 0 2.2px,#c6c6c6 2.2px 3.3px);"></div>
<div style="left:8.6px;top:660.9px;width:104.3px;height:1px;background:rgba(255,255,255,0.45);"></div>
<span style="left:9.60px;top:653.00px;font-size:7.5px;color:#782519;transform:scale(0.9699,1.120);transform-origin:0 6px;-webkit-text-stroke:0.16px #782519;">GROSSESSE DÉCLARATION</span>
<div style="left:8.6px;top:669.9px;width:104.3px;height:1px;background-image:repeating-linear-gradient(90deg,#8c8c8c 0 2.2px,#c6c6c6 2.2px 3.3px);"></div>
<div style="left:8.6px;top:670.9px;width:104.3px;height:1px;background:rgba(255,255,255,0.45);"></div>
<span style="left:9.60px;top:663.00px;font-size:7.5px;color:#782519;transform:scale(1.0332,1.120);transform-origin:0 6px;-webkit-text-stroke:0.16px #782519;">LIPIDIQUE N°1</span>
<div style="left:8.6px;top:679.9px;width:104.3px;height:1px;background-image:repeating-linear-gradient(90deg,#8c8c8c 0 2.2px,#c6c6c6 2.2px 3.3px);"></div>
<div style="left:8.6px;top:680.9px;width:104.3px;height:1px;background:rgba(255,255,255,0.45);"></div>
<span style="left:9.60px;top:673.00px;font-size:7.5px;color:#782519;transform:scale(1.0332,1.120);transform-origin:0 6px;-webkit-text-stroke:0.16px #782519;">LIPIDIQUE N°2</span>
<div style="left:8.6px;top:689.9px;width:104.3px;height:1px;background-image:repeating-linear-gradient(90deg,#8c8c8c 0 2.2px,#c6c6c6 2.2px 3.3px);"></div>
<div style="left:8.6px;top:690.9px;width:104.3px;height:1px;background:rgba(255,255,255,0.45);"></div>
<span style="left:9.60px;top:683.00px;font-size:7.5px;color:#782519;transform:scale(0.9934,1.120);transform-origin:0 6px;-webkit-text-stroke:0.16px #782519;">PROFIL BILIOPANCRÉATIQU</span>
<div style="left:8.6px;top:699.9px;width:104.3px;height:1px;background-image:repeating-linear-gradient(90deg,#8c8c8c 0 2.2px,#c6c6c6 2.2px 3.3px);"></div>
<div style="left:8.6px;top:700.9px;width:104.3px;height:1px;background:rgba(255,255,255,0.45);"></div>
<span style="left:9.60px;top:693.00px;font-size:7.5px;color:#782519;transform:scale(0.9977,1.120);transform-origin:0 6px;-webkit-text-stroke:0.16px #782519;">PROFIL HÉPATOBILIAIRE</span>
<span style="left:9.60px;top:703.00px;font-size:7.5px;color:#782519;letter-spacing:0.303px;transform:scale(1.0400,1.120);transform-origin:0 6px;-webkit-text-stroke:0.16px #782519;">Première Contraception</span>
<div style="left:8.6px;top:709.8px;width:114.5px;height:2.3px;background:#eeeeee;"></div>
<div style="left:123.3px;top:585.5px;width:3.3px;height:127px;background:linear-gradient(90deg,#bcbcbc,#dedede 40%,#c4c4c4);"></div>
<div style="left:126.6px;top:586px;width:1.4px;height:126px;background:#fafafa;"></div>
<div style="left:128px;top:586.9px;width:116px;height:12.7px;background:#306a82;"></div>
<div style="left:128px;top:599.6px;width:116px;height:1px;background:#a8a8a8;"></div>
<span style="left:169.90px;top:590.00px;font-size:8.1px;color:#fff;font-weight:bold;transform:scale(1.0400,1.150);transform-origin:0 6px;-webkit-text-stroke:0.18px #fff;">ASTHENIE</span>
<div style="left:128px;top:600.6px;width:106.3px;height:110px;background:#eeeeee;"></div>
<div style="left:234.3px;top:600.6px;width:11.8px;height:110px;background:linear-gradient(90deg,#f3f3f3,#ffffff);"></div>
<div style="left:128px;top:609.9px;width:106.3px;height:1px;background-image:repeating-linear-gradient(90deg,#8c8c8c 0 2.2px,#c6c6c6 2.2px 3.3px);"></div>
<div style="left:128px;top:610.9px;width:106.3px;height:1px;background:rgba(255,255,255,0.45);"></div>
<span style="left:128.20px;top:603.00px;font-size:7.5px;color:#782519;letter-spacing:0.240px;transform:scale(1.0400,1.120);transform-origin:0 6px;-webkit-text-stroke:0.16px #782519;">Numération FS</span>
<div style="left:128px;top:619.9px;width:106.3px;height:1px;background-image:repeating-linear-gradient(90deg,#8c8c8c 0 2.2px,#c6c6c6 2.2px 3.3px);"></div>
<div style="left:128px;top:620.9px;width:106.3px;height:1px;background:rgba(255,255,255,0.45);"></div>
<span style="left:128.20px;top:613.00px;font-size:7.5px;color:#782519;letter-spacing:0.267px;transform:scale(1.0400,1.120);transform-origin:0 6px;-webkit-text-stroke:0.16px #782519;">Plaquettes</span>
<div style="left:128px;top:629.9px;width:106.3px;height:1px;background-image:repeating-linear-gradient(90deg,#8c8c8c 0 2.2px,#c6c6c6 2.2px 3.3px);"></div>
<div style="left:128px;top:630.9px;width:106.3px;height:1px;background:rgba(255,255,255,0.45);"></div>
<span style="left:128.20px;top:623.00px;font-size:7.5px;color:#782519;letter-spacing:0.281px;transform:scale(1.0400,1.120);transform-origin:0 6px;-webkit-text-stroke:0.16px #782519;">Creatininemie</span>
<div style="left:128px;top:639.9px;width:106.3px;height:1px;background-image:repeating-linear-gradient(90deg,#8c8c8c 0 2.2px,#c6c6c6 2.2px 3.3px);"></div>
<div style="left:128px;top:640.9px;width:106.3px;height:1px;background:rgba(255,255,255,0.45);"></div>
<span style="left:128.20px;top:633.00px;font-size:7.5px;color:#782519;letter-spacing:0.268px;transform:scale(1.0400,1.120);transform-origin:0 6px;-webkit-text-stroke:0.16px #782519;">Glycemie à jeun</span>
<div style="left:128px;top:649.9px;width:106.3px;height:1px;background-image:repeating-linear-gradient(90deg,#8c8c8c 0 2.2px,#c6c6c6 2.2px 3.3px);"></div>
<div style="left:128px;top:650.9px;width:106.3px;height:1px;background:rgba(255,255,255,0.45);"></div>
<span style="left:128.20px;top:643.00px;font-size:7.5px;color:#782519;transform:scale(0.9867,1.120);transform-origin:0 6px;-webkit-text-stroke:0.16px #782519;">SGOT</span>
<div style="left:128px;top:659.9px;width:106.3px;height:1px;background-image:repeating-linear-gradient(90deg,#8c8c8c 0 2.2px,#c6c6c6 2.2px 3.3px);"></div>
<div style="left:128px;top:660.9px;width:106.3px;height:1px;background:rgba(255,255,255,0.45);"></div>
<span style="left:128.20px;top:653.00px;font-size:7.5px;color:#782519;transform:scale(0.9867,1.120);transform-origin:0 6px;-webkit-text-stroke:0.16px #782519;">SGPT</span>
<div style="left:128px;top:669.9px;width:106.3px;height:1px;background-image:repeating-linear-gradient(90deg,#8c8c8c 0 2.2px,#c6c6c6 2.2px 3.3px);"></div>
<div style="left:128px;top:670.9px;width:106.3px;height:1px;background:rgba(255,255,255,0.45);"></div>
<span style="left:128.20px;top:663.00px;font-size:7.5px;color:#782519;transform:scale(1.0397,1.120);transform-origin:0 6px;-webkit-text-stroke:0.16px #782519;">TSHus</span>
<div style="left:128px;top:679.9px;width:106.3px;height:1px;background-image:repeating-linear-gradient(90deg,#8c8c8c 0 2.2px,#c6c6c6 2.2px 3.3px);"></div>
<div style="left:128px;top:680.9px;width:106.3px;height:1px;background:rgba(255,255,255,0.45);"></div>
<span style="left:128.20px;top:673.00px;font-size:7.5px;color:#782519;letter-spacing:0.144px;transform:scale(1.0400,1.120);transform-origin:0 6px;-webkit-text-stroke:0.16px #782519;">MNI test</span>
<div style="left:244px;top:585.5px;width:2.6px;height:127px;background:#f2f2f2;"></div>
<div style="left:246.2px;top:565.6px;width:1.3px;height:147px;background:#909090;"></div>
<div style="left:247.5px;top:565.6px;width:1.2px;height:147px;background:#d4d4d4;"></div>
<div style="left:248.5px;top:565.6px;width:1.4px;height:147px;background:#8e8e8e;"></div>
<div style="left:249.9px;top:567px;width:1.3px;height:145px;background:#fafafa;"></div>
<div style="left:251.2px;top:567.3px;width:659px;height:2.7px;background:#fafafa;"></div>
<div style="left:252.2px;top:570px;width:656.3px;height:13.3px;background:#306a82;"></div>
<div style="left:251.2px;top:583.3px;width:657.3px;height:1.5px;background:#a9a9a9;"></div>
<span style="left:511.40px;top:574.00px;font-size:8.1px;color:#fff;font-weight:bold;letter-spacing:0.412px;transform:scale(1.0400,1.150);transform-origin:0 6px;-webkit-text-stroke:0.18px #fff;">Commentaires de prescription</span>
<div style="left:895.7px;top:570px;width:12.799999999999955px;height:13.299999999999955px;background:#5290ad;"></div>
<svg style="left:895.20px;top:570.60px" width="12" height="12" viewBox="0 0 12 12"><circle cx="6" cy="6" r="5.1" fill="#fff"/><path d="M6 2.5 V9.5 M2.5 6 H9.5" stroke="#3f7f9c" stroke-width="1.45"/></svg>
<div style="left:250.5px;top:584.8px;width:1.2px;height:126px;background:#a0a0a0;"></div>
<div style="left:251.7px;top:584.8px;width:647.5px;height:125.5px;background:#eeeeee;"></div>
<div style="left:899.2px;top:584.8px;width:9.5px;height:125.5px;background:linear-gradient(90deg,#f1f1f1,#ffffff);"></div>
<div style="left:908.5px;top:566px;width:1.2px;height:147px;background:#a8a8a8;"></div>
<div style="left:252px;top:594.2px;width:646.5px;height:1px;background-image:repeating-linear-gradient(90deg,#8c8c8c 0 2.2px,#c6c6c6 2.2px 3.3px);"></div>
<div style="left:252px;top:595.2px;width:646.5px;height:1px;background:rgba(255,255,255,0.45);"></div>
<span style="left:253.00px;top:587.00px;font-size:7.6px;color:#633a1e;letter-spacing:0.331px;transform:scale(1.0400,1.120);transform-origin:0 6px;-webkit-text-stroke:0.16px #633a1e;">A faire avant la prochaine consultation</span>
<div style="left:252px;top:604.1600000000001px;width:646.5px;height:1px;background-image:repeating-linear-gradient(90deg,#8c8c8c 0 2.2px,#c6c6c6 2.2px 3.3px);"></div>
<div style="left:252px;top:605.1600000000001px;width:646.5px;height:1px;background:rgba(255,255,255,0.45);"></div>
<span style="left:253.00px;top:597.00px;font-size:7.6px;color:#633a1e;letter-spacing:0.378px;transform:scale(1.0400,1.120);transform-origin:0 6px;-webkit-text-stroke:0.16px #633a1e;">A faire tous les mois pendant 6 mois</span>
<div style="left:252px;top:614.12px;width:646.5px;height:1px;background-image:repeating-linear-gradient(90deg,#8c8c8c 0 2.2px,#c6c6c6 2.2px 3.3px);"></div>
<div style="left:252px;top:615.12px;width:646.5px;height:1px;background:rgba(255,255,255,0.45);"></div>
<span style="left:253.00px;top:607.00px;font-size:7.6px;color:#633a1e;letter-spacing:0.323px;transform:scale(1.0400,1.120);transform-origin:0 6px;-webkit-text-stroke:0.16px #633a1e;">A jeun</span>
<div style="left:252px;top:624.08px;width:646.5px;height:1px;background-image:repeating-linear-gradient(90deg,#8c8c8c 0 2.2px,#c6c6c6 2.2px 3.3px);"></div>
<div style="left:252px;top:625.08px;width:646.5px;height:1px;background:rgba(255,255,255,0.45);"></div>
<span style="left:253.00px;top:617.00px;font-size:7.6px;color:#633a1e;letter-spacing:0.018px;transform:scale(1.0400,1.120);transform-origin:0 6px;-webkit-text-stroke:0.16px #633a1e;">Bilan IRSA</span>
<div style="left:252px;top:634.0400000000001px;width:646.5px;height:1px;background-image:repeating-linear-gradient(90deg,#8c8c8c 0 2.2px,#c6c6c6 2.2px 3.3px);"></div>
<div style="left:252px;top:635.0400000000001px;width:646.5px;height:1px;background:rgba(255,255,255,0.45);"></div>
<span style="left:253.00px;top:627.00px;font-size:7.6px;color:#633a1e;letter-spacing:0.360px;transform:scale(1.0400,1.120);transform-origin:0 6px;-webkit-text-stroke:0.16px #633a1e;">Comprimer le point de ponction veineuse pendant 15 minutes</span>
<div style="left:252px;top:644.0px;width:646.5px;height:1px;background-image:repeating-linear-gradient(90deg,#8c8c8c 0 2.2px,#c6c6c6 2.2px 3.3px);"></div>
<div style="left:252px;top:645.0px;width:646.5px;height:1px;background:rgba(255,255,255,0.45);"></div>
<span style="left:253.00px;top:636.00px;font-size:7.6px;color:#633a1e;letter-spacing:0.386px;transform:scale(1.0400,1.120);transform-origin:0 6px;-webkit-text-stroke:0.16px #633a1e;">Dans 1 an</span>
<div style="left:252px;top:653.96px;width:646.5px;height:1px;background-image:repeating-linear-gradient(90deg,#8c8c8c 0 2.2px,#c6c6c6 2.2px 3.3px);"></div>
<div style="left:252px;top:654.96px;width:646.5px;height:1px;background:rgba(255,255,255,0.45);"></div>
<span style="left:253.00px;top:646.00px;font-size:7.6px;color:#633a1e;letter-spacing:0.289px;transform:scale(1.0400,1.120);transform-origin:0 6px;-webkit-text-stroke:0.16px #633a1e;">Dans 3 Mois</span>
<div style="left:252px;top:663.9200000000001px;width:646.5px;height:1px;background-image:repeating-linear-gradient(90deg,#8c8c8c 0 2.2px,#c6c6c6 2.2px 3.3px);"></div>
<div style="left:252px;top:664.9200000000001px;width:646.5px;height:1px;background:rgba(255,255,255,0.45);"></div>
<span style="left:253.00px;top:656.00px;font-size:7.6px;color:#633a1e;letter-spacing:0.289px;transform:scale(1.0400,1.120);transform-origin:0 6px;-webkit-text-stroke:0.16px #633a1e;">Dans 6 Mois</span>
<div style="left:252px;top:673.8800000000001px;width:646.5px;height:1px;background-image:repeating-linear-gradient(90deg,#8c8c8c 0 2.2px,#c6c6c6 2.2px 3.3px);"></div>
<div style="left:252px;top:674.8800000000001px;width:646.5px;height:1px;background:rgba(255,255,255,0.45);"></div>
<span style="left:253.00px;top:666.00px;font-size:7.6px;color:#633a1e;letter-spacing:0.311px;transform:scale(1.0400,1.120);transform-origin:0 6px;-webkit-text-stroke:0.16px #633a1e;">non prescripteur</span>
<div style="left:3px;top:712.1px;width:909px;height:1.6px;background:#8a8a8a;"></div>
<div style="left:3px;top:713.7px;width:909px;height:18.3px;background:#ececec;"></div>
<div style="left:5px;top:714.5px;width:893px;height:1px;background:#fafafa;"></div>
<div style="left:5px;top:715.5px;width:892.8px;height:12px;background:#eceded;"></div>
<div style="left:5px;top:727.3px;width:893px;height:1.7px;background:#9a9a9a;"></div>
<div style="left:897.5px;top:715px;width:1.3px;height:14px;background:#8f8f8f;"></div>
<div style="left:5px;top:729px;width:893px;height:1.2px;background:#fafafa;"></div>
<div style="left:0px;top:730.3px;width:915px;height:1.7px;background:#6e6e6e;"></div>
<svg style="left:905px;top:722px" width="10" height="10" viewBox="0 0 10 10"><path d="M9 2 L2 9 M9 5 L5 9" stroke="#999" stroke-width="0.9"/></svg>
</body></html>
